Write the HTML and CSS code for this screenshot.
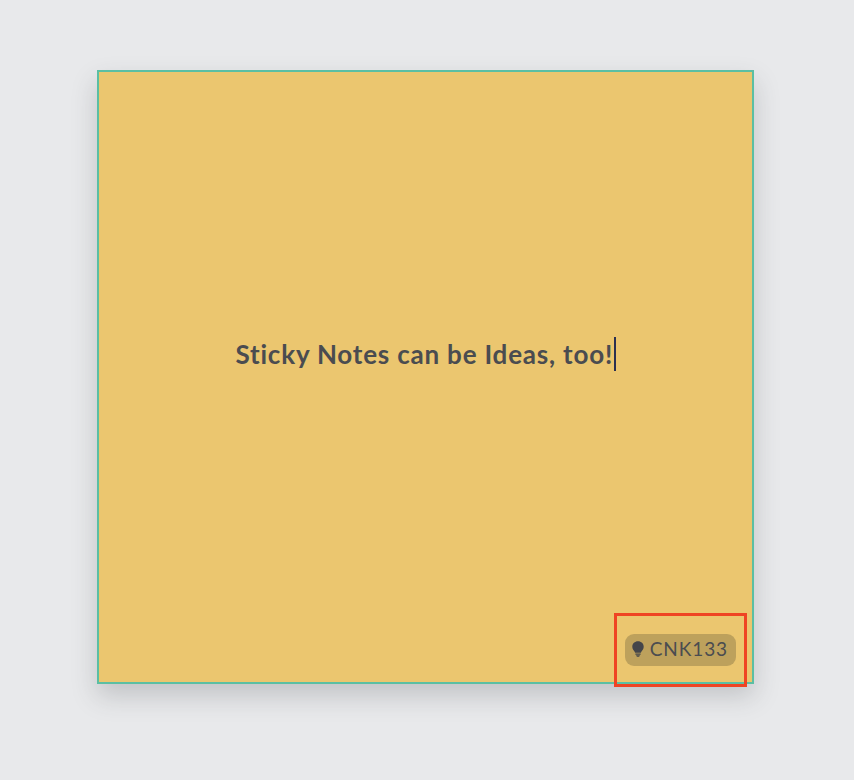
FILE: index.html
```html
<!DOCTYPE html>
<html lang="en">
<head>
<meta charset="utf-8">
<title>Sticky Note</title>
<link rel="stylesheet" href="styles.css">
</head>
<body>
<main class="note">
  <p class="note-text">Sticky Notes can be Ideas, too!<span class="caret"></span></p>
  <div class="badge">
    <svg class="bulb" viewBox="0 0 12 16" width="12" height="16" aria-hidden="true">
      <path d="M6 .3C2.8.3.3 2.7.3 5.7c0 2.2 1.3 3.4 2.2 4.7.3.5.5.9.6 1.4h5.8c.1-.5.3-.9.6-1.4.9-1.3 2.2-2.5 2.2-4.7C11.7 2.7 9.2.3 6 .3z"/>
      <path d="M3.4 12.5h5.2v1.2H3.4zM4 14.3h4l-.9 1.4H4.9z"/>
    </svg>
    <span class="badge-label">CNK133</span>
  </div>
  <div class="highlight"></div>
</main>
</body>
</html>
```
FILE: styles.css
```css
* { box-sizing: border-box; }
html, body { margin: 0; height: 100%; }
body {
  background: #e8e9eb;
  padding: 70px 100px 96px 97px;
  font-family: Lato, "Liberation Sans", sans-serif;
}
.note {
  position: relative;
  width: 657px;
  height: 614px;
  background: #ebc66f;
  border: 2px solid #5bbfa3;
  box-shadow: 0 12px 24px rgba(60, 64, 70, 0.22);
  display: flex;
  align-items: center;
  justify-content: center;
  padding: 0 0 46px 0;
}
.note-text {
  margin: 0;
  display: flex;
  align-items: center;
  font-size: 26px;
  font-weight: 700;
  line-height: 34px;
  letter-spacing: 0.8px;
  color: #4a4c50;
}
.caret {
  display: inline-block;
  width: 1.5px;
  height: 34px;
  margin-left: 1px;
  background: #2b3050;
}
.badge {
  position: absolute;
  right: 16px;
  bottom: 16px;
  display: flex;
  align-items: center;
  gap: 6px;
  height: 32px;
  padding: 0 8px 4px 7px;
  border-radius: 9px;
  background: #bda15c;
  color: #4a4c50;
  font-size: 19px;
  letter-spacing: 0.9px;
}
.bulb { fill: #43454a; flex: none; margin-top: 2px; }
.highlight {
  position: absolute;
  right: 5px;
  bottom: -5px;
  width: 133px;
  height: 74px;
  border: 3px solid #ef4423;
  pointer-events: none;
}
```
